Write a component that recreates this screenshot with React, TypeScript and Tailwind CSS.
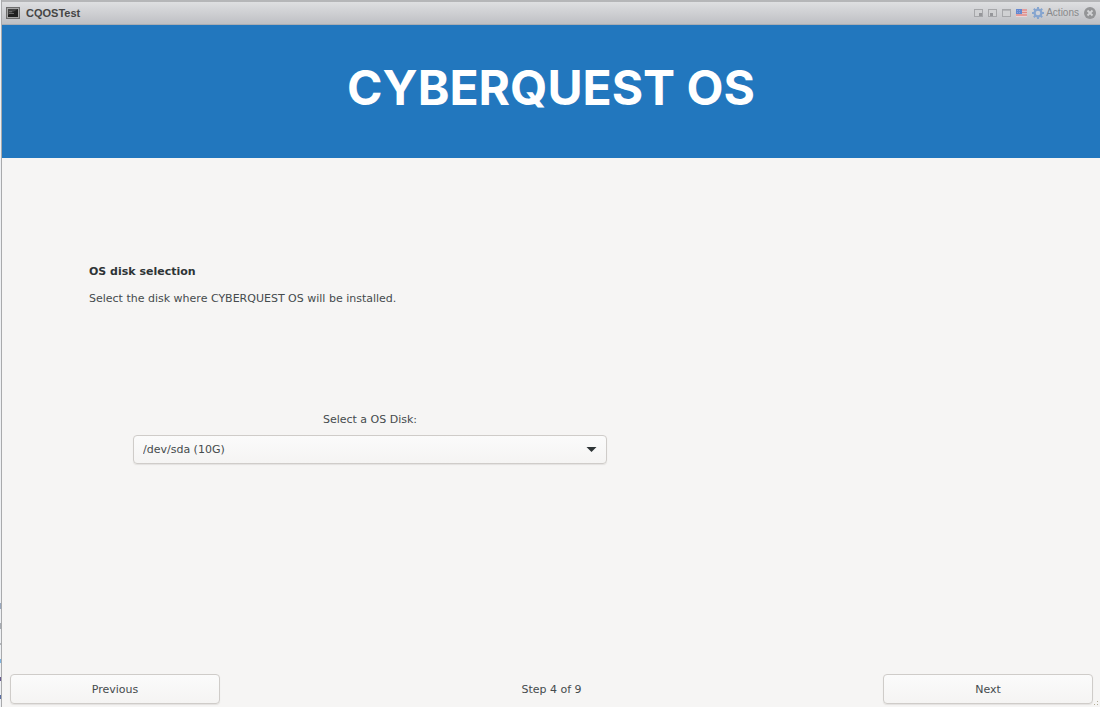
import { useState } from "react";

const DISKS = ["/dev/sda (10G)"];

const buttonClass =
  "h-[30px] w-[210px] rounded border border-[#cfccc9] bg-linear-to-b from-[#fbfbfb] to-[#f5f4f3] pt-px text-center text-[#454b4d] shadow-[0_1px_1px_#e4e2e0]";

function ConsoleIcon() {
  return (
    <svg width="14" height="12" viewBox="0 0 14 12" aria-hidden="true">
      <rect x="0.5" y="0.5" width="13" height="11" fill="#a5a5a5" stroke="#6c6c6c" />
      <rect x="2" y="2" width="10" height="8" fill="#202020" />
      <path d="M2 2h10L2 8z" fill="#424242" />
      <path d="M3 4.5h3M3 6.5h5" stroke="#6a6a6a" />
    </svg>
  );
}

function WindowBoxIcon({ kind }: { kind: "right" | "left" | "full" }) {
  return (
    <svg width="9" height="8" viewBox="0 0 9 8" aria-hidden="true">
      <rect x="0.5" y="0.5" width="8" height="7" fill="#d0d1d3" stroke="#a6a7aa" />
      {kind === "right" && <rect x="5" y="4" width="3" height="3" fill="#95969a" />}
      {kind === "left" && <rect x="2" y="4" width="3" height="3" fill="#95969a" />}
      {kind === "full" && <path d="M1 1.5h7" stroke="#b4b5b8" />}
    </svg>
  );
}

function FlagIcon() {
  return (
    <svg width="11" height="8" viewBox="0 0 11 8" aria-hidden="true">
      <rect width="11" height="8" fill="#e8d5d8" />
      <path d="M0 1h11M0 3.5h11M0 6h11" stroke="#e08a86" strokeWidth="1.4" />
      <rect width="6" height="5" fill="#6488d0" />
      <path d="M1 1.5h4M1 3.5h4" stroke="#8aa5de" strokeDasharray="1 1" />
    </svg>
  );
}

function GearIcon() {
  return (
    <svg width="12" height="12" viewBox="0 0 12 12" aria-hidden="true">
      <path d="M6 0v12M0 6h12M1.8 1.8l8.4 8.4M10.2 1.8l-8.4 8.4" stroke="#86a5cf" strokeWidth="2" />
      <circle cx="6" cy="6" r="3.4" fill="#cfd2d8" stroke="#86a5cf" strokeWidth="2.2" />
    </svg>
  );
}

function CloseIcon() {
  return (
    <svg width="12" height="12" viewBox="0 0 12 12" aria-hidden="true">
      <circle cx="6" cy="6" r="6" fill="#949597" />
      <path d="M3.5 3.5l5 5M8.5 3.5l-5 5" stroke="#d3d4d6" strokeWidth="1.8" />
    </svg>
  );
}

function TitleBar() {
  return (
    <div className="flex h-[25px] items-center justify-between border-t-2 border-b border-t-[#b5b6b8] border-b-[#a9adb3] bg-linear-to-b from-[#dedfe1] to-[#bfc0c4] px-1 font-['Liberation_Sans',Arial,sans-serif]">
      <div className="flex items-center gap-[6px]">
        <ConsoleIcon />
        <span className="text-[11px] font-bold text-[#454545]">CQOSTest</span>
      </div>
      <div className="flex items-center gap-[5px]">
        <button aria-label="Dock right"><WindowBoxIcon kind="right" /></button>
        <button aria-label="Dock left"><WindowBoxIcon kind="left" /></button>
        <button aria-label="Maximize"><WindowBoxIcon kind="full" /></button>
        <button aria-label="Keyboard layout"><FlagIcon /></button>
        <button className="flex items-center gap-[2px] text-[10px] text-[#88898b]">
          <GearIcon />
          Actions
        </button>
        <button aria-label="Close"><CloseIcon /></button>
      </div>
    </div>
  );
}

// Sliver of the page behind the window, visible along its left edge
function BackgroundSliver() {
  return (
    <div className="flex w-px flex-col justify-end gap-[14px] bg-[#eef0f3] pb-2">
      <span className="h-[6px] bg-[#9aa9bf]" />
      <span className="h-[6px] bg-[#a9adb3]" />
      <span className="h-[2px] bg-[#b3b6ba]" />
      <span className="h-[4px] bg-[#7cb3e0]" />
      <span className="h-[4px] bg-[#67598f]" />
      <span className="h-[4px] bg-[#5c6fa3]" />
    </div>
  );
}

export default function App() {
  const [disk, setDisk] = useState(DISKS[0]);

  return (
    <div className="flex min-h-screen bg-[#f6f5f4]">
      <BackgroundSliver />
      <div className="flex flex-1 flex-col border-l border-[#a9aaac] font-['DejaVu_Sans',sans-serif] text-[11px] leading-[14px] text-[#454b4d]">
        <TitleBar />

        <header className="flex h-[133px] items-center justify-center bg-[#2277be] pb-2">
          <h1 className="font-[Inter,sans-serif] text-[48px] leading-[56px] font-bold text-white">CYBERQUEST OS</h1>
        </header>

        <main className="flex flex-1 flex-col px-[87px] pt-[107px]">
          <h2 className="font-bold text-[#2e3436]">OS disk selection</h2>
          <p className="mt-[13px]">Select the disk where CYBERQUEST OS will be installed.</p>

          <div className="mt-[107px] ml-11 flex w-[474px] flex-col">
            <label htmlFor="disk" className="text-center">Select a OS Disk:</label>
            <div className="relative mt-2">
              <select
                id="disk"
                value={disk}
                onChange={(e) => setDisk(e.target.value)}
                className="h-[29px] w-full appearance-none rounded border border-[#cfccc9] bg-linear-to-b from-[#fbfbfb] to-[#f5f4f3] px-[9px] text-[#454b4d] shadow-[0_1px_1px_#e4e2e0]"
              >
                {DISKS.map((d) => (
                  <option key={d}>{d}</option>
                ))}
              </select>
              <svg className="pointer-events-none absolute top-3 right-[10px]" width="11" height="6" viewBox="0 0 11 6" aria-hidden="true">
                <path d="M0.5 0h10L5.5 5z" fill="#2e3436" />
              </svg>
            </div>
          </div>
        </main>

        <footer className="relative flex items-center justify-between pr-[7px] pb-[3px] pl-2">
          <button className={buttonClass}>Previous</button>
          <span className="pt-px">Step 4 of 9</span>
          <button className={buttonClass}>Next</button>
          <svg className="absolute right-0 bottom-0" width="7" height="7" viewBox="0 0 7 7" aria-hidden="true">
            <path d="M1 4h1v1H1zM4 4h1v1H4zM4 1h1v1H4z" fill="#b3ae98" />
          </svg>
        </footer>
      </div>
    </div>
  );
}
